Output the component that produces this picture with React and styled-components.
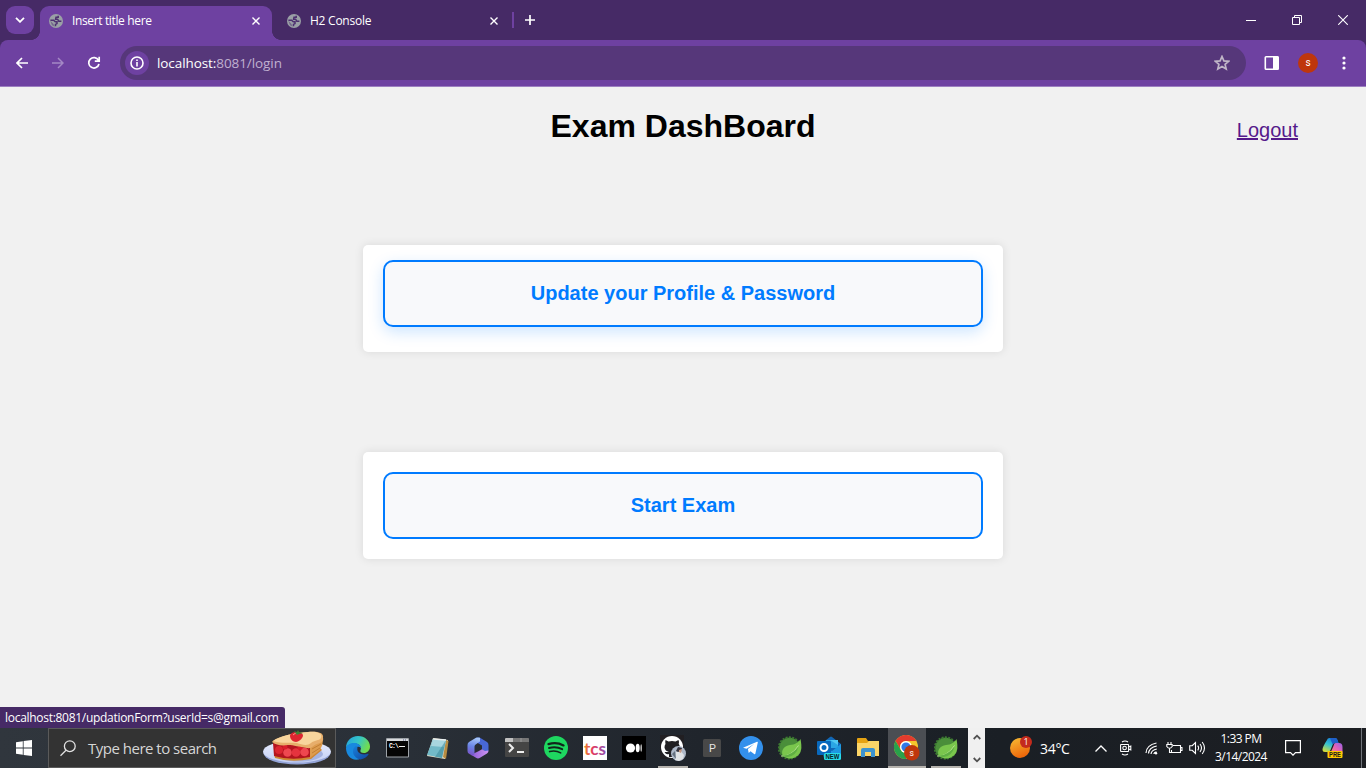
import React from "react";
import styled, { createGlobalStyle, css } from "styled-components";

const Global = createGlobalStyle`
  *, *::before, *::after { box-sizing: border-box; }
  html, body { margin: 0; padding: 0; overflow: hidden; }
  svg { display: block; flex: none; }
`;

const ui = `"Segoe UI", "Open Sans", "Noto Sans", sans-serif`;
const strip = "#462a66";
const bar = "#6e41a1";

const Screen = styled.div`
  width: 1366px;
  height: 768px;
  display: flex;
  flex-direction: column;
  font-family: ${ui};
  overflow: hidden;
  background: #f1f1f1;
`;

/* Browser chrome */
const TabStrip = styled.div`
  height: 40px;
  flex: none;
  background: ${strip};
  display: flex;
  padding: 6px 0 0 6px;
`;
const TabSearch = styled.div`
  width: 28px;
  height: 28px;
  border-radius: 9px;
  background: ${bar};
  display: flex;
  align-items: center;
  justify-content: center;
  margin-right: 6px;
`;
const Tab = styled.div`
  width: ${(p) => p.$w}px;
  height: 34px;
  display: flex;
  align-items: center;
  padding: 0 ${(p) => (p.$active ? 12 : 14)}px 5px ${(p) => (p.$active ? 9 : 15)}px;
  position: relative;
  border-radius: 9px 9px 0 0;
  ${(p) =>
    p.$active &&
    css`
      background: ${bar};
      &::before,
      &::after {
        content: "";
        position: absolute;
        bottom: 0;
        width: 9px;
        height: 9px;
      }
      &::before {
        left: -9px;
        background: radial-gradient(circle at 0 0, transparent 8.6px, ${bar} 9.2px);
      }
      &::after {
        right: -9px;
        background: radial-gradient(circle at 100% 0, transparent 8.6px, ${bar} 9.2px);
      }
    `}
`;
const TabTitle = styled.span`
  flex: 1;
  margin-left: 9px;
  font-size: 12px;
  line-height: 16px;
  letter-spacing: ${(p) => p.$ls}px;
  color: #fff;
  white-space: nowrap;
`;
const TabDivider = styled.div`
  width: 2px;
  height: 16px;
  margin: 6px 11px 0 0;
  background: ${bar};
`;
const PlusBox = styled.div`
  padding-top: 9px;
`;
const WindowControls = styled.div`
  margin-left: auto;
  display: flex;
  height: 28px;
`;
const WindowButton = styled.div`
  width: 46px;
  display: flex;
  align-items: center;
  justify-content: center;
`;
const ToolbarBack = styled.div`
  background: ${strip};
  flex: none;
`;
const Toolbar = styled.div`
  height: 47px;
  background: ${bar};
  border-bottom: 1px solid #9c7fc0;
  border-radius: 8px 8px 0 0;
  display: flex;
  align-items: center;
  padding: 0 4px 0 4px;
`;
const ToolButton = styled.div`
  width: 36px;
  display: flex;
  align-items: center;
  justify-content: center;
`;
const Omnibox = styled.div`
  flex: 1;
  height: 34px;
  margin: 0 8px;
  border-radius: 17px;
  background: #56377a;
  display: flex;
  align-items: center;
  padding: 0 16px 0 5px;
`;
const InfoDisc = styled.div`
  width: 24px;
  height: 24px;
  border-radius: 50%;
  background: ${bar};
  display: flex;
  align-items: center;
  justify-content: center;
`;
const Address = styled.div`
  flex: 1;
  margin-left: 8px;
  font-size: 13.5px;
  line-height: 20px;
  letter-spacing: -0.08px;
  color: #c0b0d0;
  b {
    font-weight: 400;
    color: #fff;
  }
`;
const Avatar = styled.div`
  width: 20px;
  height: 20px;
  border-radius: 50%;
  background: #bf360c;
  color: #fff;
  font: 400 10px/19px Roboto, sans-serif;
  text-align: center;
`;

/* Page */
const Page = styled.main`
  position: relative;
  height: 641px;
  flex: none;
  background: #f1f1f1;
  font-family: Arial, "Liberation Sans", sans-serif;
  display: flex;
  flex-direction: column;
  align-items: center;
`;
const PageHeader = styled.header`
  width: 100%;
  height: 158px;
  padding: 21px 68px 0;
  display: grid;
  grid-template-columns: 1fr auto 1fr;
  align-items: baseline;
  align-content: start;
`;
const Title = styled.h1`
  grid-column: 2;
  margin: 0;
  font-size: 32px;
  line-height: 37px;
  color: #000;
`;
const Logout = styled.a`
  justify-self: end;
  font-size: 20px;
  color: #551a8b;
  text-decoration: underline;
`;
const Card = styled.section`
  width: 640px;
  height: 107px;
  padding: 20px;
  margin-bottom: 100px;
  border-radius: 5px;
  background: #fff;
  box-shadow: 0 0 10px rgba(0, 0, 0, 0.1);
`;
const CardLink = styled.div`
  height: 67px;
  border: 2px solid #007bff;
  border-radius: 10px;
  background: #f8f9fb;
  color: #007bff;
  font-size: 20px;
  font-weight: 700;
  line-height: 62px;
  text-align: center;
  ${(p) =>
    p.$hover &&
    css`
      transform: translateY(-5px);
      box-shadow: 0 5px 15px rgba(0, 123, 255, 0.2);
    `}
`;
const StatusBubble = styled.div`
  position: absolute;
  left: 0;
  bottom: 0;
  width: 285px;
  height: 21px;
  padding-left: 5px;
  border-radius: 0 3px 0 0;
  background: ${strip};
  color: #fff;
  font: 12px/21px ${ui};
  letter-spacing: -0.29px;
  white-space: nowrap;
`;

/* Taskbar */
const Taskbar = styled.footer`
  height: 40px;
  flex: none;
  display: flex;
  background: linear-gradient(90deg, #30363d 0, #2a3038 380px, #20252c 700px, #1a1f25 1000px, #1c1e22 1366px);
`;
const StartButton = styled.div`
  width: 48px;
  display: flex;
  align-items: center;
  justify-content: center;
`;
const SearchBox = styled.div`
  width: 288px;
  height: 40px;
  border: 1px solid #5a5a5a;
  background: #333;
  display: flex;
  align-items: center;
  padding: 0 4px 0 11px;
`;
const SearchText = styled.span`
  flex: 1;
  margin-left: 12px;
  font-size: 15px;
  letter-spacing: -0.5px;
  color: #d6d6d6;
  white-space: nowrap;
`;
const AppList = styled.div`
  display: flex;
  width: 629px;
  margin-left: 3px;
  gap: 1px;
`;
const AppSlot = styled.div`
  width: 38px;
  flex: none;
  height: 40px;
  margin-left: ${(p) => p.$shift || 0}px;
  display: flex;
  align-items: center;
  justify-content: center;
  background: ${(p) => (p.$active ? "#4b4e53" : "transparent")};
  ${(p) =>
    p.$open &&
    css`
      background-image: linear-gradient(#b5b2ad, #b5b2ad);
      background-size: ${p.$active ? "100%" : "30px"} 2px;
      background-position: center bottom;
      background-repeat: no-repeat;
    `}
`;
const TaskScroll = styled.div`
  width: 17px;
  background: #f0f0f0;
  display: flex;
  flex-direction: column;
  align-items: center;
  justify-content: space-between;
  padding: 6px 0 5px;
`;
const Tray = styled.div`
  flex: 1;
  display: flex;
  align-items: center;
  padding-left: 24px;
`;
const TrayItem = styled.div`
  width: ${(p) => p.$w}px;
  display: flex;
  align-items: center;
  justify-content: center;
`;
const Temperature = styled.span`
  width: 42px;
  margin-left: 7px;
  font-size: 14px;
  letter-spacing: -0.3px;
  color: #fff;
`;
const Clock = styled.div`
  width: 54px;
  margin-left: -2px;
  font-size: 12px;
  line-height: 18px;
  letter-spacing: -0.55px;
  text-align: center;
  color: #fff;
  white-space: nowrap;
`;
const ShowDesktop = styled.div`
  width: 5px;
  height: 40px;
  margin-left: auto;
  border-left: 1px solid #70747a;
`;

const Line = ({ w = 16, h = w, vb = `0 0 ${w} ${h}`, sw = 1.5, c = "#fff", children }) => (
  <svg width={w} height={h} viewBox={vb} fill="none" stroke={c} strokeWidth={sw}>
    {children}
  </svg>
);

const Globe = () => (
  <svg width="14" height="14" viewBox="0 0 14 14">
    <circle cx="7" cy="7" r="7" fill="#9aa0a6" />
    <path
      d="M1.400 6.200H4.600L6.300 7.800H8V9.600L6.500 10.400V12.300M9.200 1.800V3.200H7L6.600 5.200H8.600L9.800 7.200H12.400"
      fill="none"
      stroke="#4d3070"
      strokeWidth="1.500"
    />
    <path d="M1.300 6.800 4.500 10 5.500 12.500 3 11.200Z" fill="#4d3070" opacity=".5" />
  </svg>
);
const Cross = () => (
  <Line w={8} sw={1.4}>
    <path d="M.5.500 7.500 7.500M7.500.500.500 7.500" />
  </Line>
);

const Pie = () => (
  <svg width="68" height="36" viewBox="0 0 68 36">
    <defs>
      <linearGradient id="plate" y1="0" x2="0" y2="1">
        <stop stopColor="#e9eeff" />
        <stop offset="1" stopColor="#c3cff3" />
      </linearGradient>
    </defs>
    <ellipse cx="34" cy="23" rx="33.500" ry="11.500" fill="#93a3d6" />
    <ellipse cx="34" cy="21.500" rx="34" ry="11" fill="url(#plate)" />
    <ellipse cx="36" cy="24" rx="24" ry="7.500" fill="#a5b3e0" />
    <path d="M11 24Q28 29 46 26L57 18 59 20 48 29Q28 33 12 28Z" fill="#cf8732" />
    <path d="M10 13 11 26Q28 31 47 27V16Z" fill="#b3151f" />
    <path d="M47 17Q52 12 60 10 60 15 57 20L47 28Z" fill="#dd9c4e" />
    <path d="M49 19 58 14M49 23 57 18" stroke="#c27f35" fill="none" />
    <circle cx="16" cy="20" r="4" fill="#dd2631" />
    <circle cx="24.500" cy="22.500" r="4.300" fill="#ef4850" />
    <circle cx="33" cy="22.500" r="4.300" fill="#e5333e" />
    <circle cx="41.500" cy="22" r="4.300" fill="#ee474f" />
    <circle cx="22" cy="17" r="2.500" fill="#d81e2a" />
    <circle cx="37" cy="17.500" r="2.500" fill="#d81e2a" />
    <path d="M9 12C13 7 30 3 45 2 56 1 61 3 60 8 61 11 58 13 54 14 50 15 49 19 44 18 36 17 31 15 25 15 18 16 13 15 9 12Z" fill="#e7ae6b" />
    <path d="M10 11C16 6 31 3 45 2 55 1 60 4 58 8 56 11 51 10 48 13 45 16 39 15 34 13 27 12 20 14 10 11Z" fill="#f8d59c" />
    <path d="M27 6C27 1 39 1 40 5 40 9 35 12 33 12 30 12 27 9 27 6Z" fill="#dc2630" />
    <path d="M30 5Q32 2 35 4" stroke="#ff8c87" fill="none" />
    <path d="m31 1 3 1 1-2 1 2 4 1-4 1-2 1Z" fill="#3d8234" />
  </svg>
);

const Edge = () => (
  <svg width="24" height="24" viewBox="0 0 24 24">
    <defs>
      <linearGradient id="edgeTop" x1="0" x2="1" y2=".4">
        <stop stopColor="#219fe1" />
        <stop offset=".55" stopColor="#36c6c5" />
        <stop offset="1" stopColor="#70dc50" />
      </linearGradient>
      <linearGradient id="edgeLow" y1="0" x1="0" x2="1" y2="1">
        <stop stopColor="#1782dd" />
        <stop offset="1" stopColor="#12439b" />
      </linearGradient>
    </defs>
    <path d="M0 12C0 5 5 0 12 0S24 5 24 10.500C24 14.500 21 17 18 17S14 15.500 14.400 14.500C16 11.500 14 7.500 9 7.500 4 7.500.5 10 0 12Z" fill="url(#edgeTop)" />
    <path d="M0 12C.5 9 4 7 8.500 7 12 7 15 9.500 15 12 12 9 8.500 11.500 8.500 15.500 8.500 19 12 22 15 22.500 7 26.500 0 20 0 12Z" fill="#1889df" />
    <path d="M9 10.500C5 14 7 22.500 14.500 23.500 18 23 21 21 22.500 18.500 23 17.500 22 17.500 21.500 17.800 16 20 10 16.500 11.500 11.500 11 10 9.800 10 9 10.500Z" fill="url(#edgeLow)" />
  </svg>
);
const Cmd = () => (
  <svg width="23" height="20" viewBox="0 0 23 20">
    <path d="M.5.5h22v18.500H.5Z" fill="#050505" stroke="#9ea3a8" />
    <path d="M1 1h21v2H1Z" fill="#d8dadd" />
    <path d="M17 2h1M19 2h1" stroke="#555c88" />
    <text x="3" y="9.500" fontSize="6.500" fontWeight="700" fontFamily="Liberation Mono, monospace" fill="#fff" textLength="10">C:\</text>
    <path d="M13 8.500h6" stroke="#eee" />
  </svg>
);
const Notepad = () => (
  <svg width="23" height="23" viewBox="0 0 23 23">
    <path d="M7 1 22 3 19 22 1 19Z" fill="#e2ddc8" />
    <path d="M20 3 22.500 4 20 22 17 20Z" fill="#b68c42" />
    <path d="M7 2 20 3 16 21 1 18Z" fill="#72bac8" />
    <path d="M7 2 20 3 18 10 5 9Z" fill="#a8d6df" />
    <path d="M20 3 16 21 9 20Z" fill="#3a8999" opacity=".55" />
    <path d="M7.500 2 20 3" stroke="#e9eeee" strokeWidth="1.500" />
  </svg>
);
const Office = () => (
  <svg width="22" height="22" viewBox="0 0 22 22">
    <defs>
      <linearGradient id="offLeft" y1="0" x1=".5" x2=".3" y2="1">
        <stop stopColor="#a6c6f8" />
        <stop offset=".5" stopColor="#6a86e6" />
        <stop offset="1" stopColor="#7a52c8" />
      </linearGradient>
      <linearGradient id="offLow">
        <stop stopColor="#8a5bd6" />
        <stop offset="1" stopColor="#cf94f2" />
      </linearGradient>
    </defs>
    <path d="M9 .8Q11 0 13 .8L20 5Q21.500 6 21.500 8V13Q21.500 15 20 15.500L15 12.500V8.500L9 5Z" fill="#4868d6" />
    <path d="M21.500 13.500Q21.500 15.500 20 16.500L13 20.800Q11 22 9 20.800L4 17.800 11 14.500 15 12.300 18 14Z" fill="url(#offLow)" />
    <path d="M13 .8Q11 0 9 .8L2 5Q.5 6 .5 8V14Q.5 16 2 16.800L5 18.500Q8 18.500 7.500 14.500V9.500Q7.500 8 9 7.200L13 4.500Z" fill="url(#offLeft)" />
  </svg>
);
const Terminal = () => (
  <svg width="24" height="20" viewBox="0 0 24 20">
    <rect width="24" height="19" rx="1" fill="#454545" />
    <path d="M0 1Q0 0 1 0H23Q24 0 24 1V4H0Z" fill="#777" />
    <path d="M1 0H8V4H0V1Z" fill="#c1c1c1" />
    <path d="M16 0V4" stroke="#999" />
    <path d="m4 6 4 4-4 4" stroke="#eee" strokeWidth="2" fill="none" />
    <path d="M12 14h7" stroke="#eee" strokeWidth="2" />
  </svg>
);
const Spotify = () => (
  <svg width="24" height="24" viewBox="0 0 24 24">
    <circle cx="12" cy="12" r="12" fill="#1ed760" />
    <g fill="none" stroke="#12251b" strokeLinecap="round">
      <path d="M4.500 8.100Q12.500 5.500 19.500 9.400" strokeWidth="2.300" />
      <path d="M5 12Q12 10 18.200 13.200" strokeWidth="1.900" />
      <path d="M5.600 15.600Q11.500 14 16.700 16.900" strokeWidth="1.600" />
    </g>
  </svg>
);
const Tcs = () => (
  <svg width="24" height="24" viewBox="0 0 24 24">
    <defs>
      <linearGradient id="tcsInk">
        <stop stopColor="#ee862a" />
        <stop offset=".4" stopColor="#e23b64" />
        <stop offset="1" stopColor="#8c50b7" />
      </linearGradient>
    </defs>
    <path d="M0 0h24v24H0Z" fill="#fff" />
    <text x="1" y="18.500" textLength="22" lengthAdjust="spacingAndGlyphs" fontFamily="Lato, sans-serif" fontSize="17.500" fontWeight="700" fill="url(#tcsInk)">tcs</text>
  </svg>
);
const Medium = () => (
  <svg width="24" height="24" viewBox="0 0 24 24">
    <path d="M0 0h24v24H0Z" />
    <circle cx="8.500" cy="12" r="4.600" fill="#fff" />
    <ellipse cx="15.700" cy="12" rx="2" ry="4.200" fill="#fff" />
    <ellipse cx="19.200" cy="12" rx=".8" ry="3.800" fill="#bbb" />
  </svg>
);
const Github = () => (
  <svg width="26" height="26" viewBox="0 0 26 26">
    <path d="M0 0h24v24H0Z" fill="#211f22" />
    <circle cx="12" cy="12" r="11" fill="#fff" />
    <path d="M5.500 5 8.500 6.500Q12 5.500 15.500 6.500L18.500 5Q19.500 7 18.700 8.700 20 10 19.500 13 18.500 16.500 14.500 17L15 22H9V19Q6 20 4.500 17 7 17 9 17 5 16 4.500 12.500 4.500 10 5.500 9 5 7 5.500 5Z" fill="#211f22" />
    <circle cx="18.500" cy="18.500" r="7.500" fill="#aeb8c8" />
    <path d="m15 25 1-8 4-2 4 5-1 4-4 2Z" fill="#e0e2e5" />
    <path d="m16 16 2-4 4 1-1 3-3 1Z" fill="#35333d" />
    <path d="m19 15 3-1-1 4-2-1Z" fill="#c79a83" />
    <path d="m12 19 3-3 1 8Z" fill="#65707e" />
  </svg>
);
const Letter = () => (
  <svg width="18" height="18" viewBox="0 0 18 18">
    <rect width="18" height="18" rx="1.500" fill="#484848" />
    <text x="9.500" y="13" textAnchor="middle" fontSize="10.500" fontFamily="Liberation Sans, sans-serif" fill="#e6e6e6">P</text>
  </svg>
);
const Telegram = () => (
  <svg width="24" height="24" viewBox="0 0 24 24">
    <circle cx="12" cy="12" r="12" fill="#3390ec" />
    <path d="m4 11.700 14-6q1-.3.800.900l-2.400 11q-.3 1-1.300.4l-3.600-2.700-1.800 1.800-.8-4 6.500-5.400-7.800 5Z" fill="#fff" />
  </svg>
);
const Leaf = () => (
  <svg width="24" height="24" viewBox="0 0 24 24">
    <circle cx="11.500" cy="12" r="10.500" fill="#4a8e3a" />
    <circle cx="11.500" cy="12" r="10.700" fill="none" stroke="#3c7931" strokeWidth="2" strokeDasharray="2 1.300" />
    <path d="M22.500 3C24 11 24 17 18.500 20.500 14 23.500 8 23 4.500 19 3 14 6 10 12 9 17 8.500 20 7 22.500 3Z" fill="#7ac64d" />
    <path d="M3 20Q13 21 20.500 9.500" fill="none" stroke="#c3e79c" strokeWidth=".9" />
    <path d="M4.500 19.500Q14 19.500 20.500 10.500 18.500 19.500 10 21 7 21.500 4.500 19.500Z" fill="#5fb043" />
  </svg>
);
const Outlook = () => (
  <svg width="24" height="24" viewBox="0 0 24 24">
    <path d="M4 8 13 1Q14 0 15 1L24 8V17H5Z" fill="#1267b5" />
    <path d="M9 4h12v8H9Z" fill="#2ba6e4" />
    <path d="m13 4 8 5V4Z" fill="#50c8f2" />
    <path d="m5 11 10 4 9-7v12q0 2-2 2H7Z" fill="#1e98e0" />
    <rect y="5" width="14" height="14" rx="1" fill="#0869bd" />
    <circle cx="7" cy="11.500" r="3.500" stroke="#fff" strokeWidth="2" fill="none" />
    <rect x="7" y="17" width="17" height="7" rx="1.500" fill="#28dce9" />
    <text x="8.500" y="23" textLength="14" lengthAdjust="spacingAndGlyphs" fontSize="6.800" fontWeight="700" fontFamily="Liberation Sans, sans-serif" fill="#06232a">NEW</text>
  </svg>
);
const Folder = () => (
  <svg width="22" height="20" viewBox="0 0 22 20">
    <path d="M0 1Q0 0 1 0H9L11 3H21Q22 3 22 4V18H0Z" fill="#e5a313" />
    <path d="M0 5H10L12 3H22V18H0Z" fill="#fbd568" />
    <path d="M4 19V12Q4 10 6 10H16Q18 10 18 12V19H14V14H8V19Z" fill="#3d93ce" />
  </svg>
);
const Chrome = () => (
  <svg width="26" height="26" viewBox="0 0 26 26">
    <circle cx="12" cy="12" r="12" fill="#f5c62d" />
    <path d="M1.600 6A12 12 0 0 1 22.400 6H12A6 6 0 0 0 6.800 15Z" fill="#e33b2e" />
    <path d="M1.600 6A12 12 0 0 0 12 24L17.200 15A6 6 0 0 1 6.800 15Z" fill="#28a14b" />
    <circle cx="12" cy="12" r="6" fill="#fff" />
    <circle cx="12" cy="12" r="4.600" fill="#3079e7" />
    <circle cx="17.800" cy="17.800" r="7.700" fill="#bf360c" />
    <text x="17.800" y="21" textAnchor="middle" fontSize="8.500" fontFamily="Roboto, sans-serif" fill="#fff">s</text>
  </svg>
);
const Copilot = () => (
  <svg width="22" height="22" viewBox="0 0 22 22">
    <defs>
      <linearGradient id="coLeft" x1=".7" x2=".2" y2="1">
        <stop stopColor="#1579dc" />
        <stop offset=".5" stopColor="#36c2d0" />
        <stop offset="1" stopColor="#d7dd37" />
      </linearGradient>
      <linearGradient id="coRight" y1="0" x1="1" x2="0" y2="1">
        <stop stopColor="#9561e7" />
        <stop offset=".5" stopColor="#e763b5" />
        <stop offset="1" stopColor="#f8975d" />
      </linearGradient>
    </defs>
    <path d="M5 3Q5.500 1 7.500 1H13Q15 1 15.500 3L16.500 6H13Q11 6 10.500 8L8.500 13Q7.500 15 5.500 15H3Q.5 15 .5 12.500.5 10 5 3Z" fill="url(#coLeft)" />
    <path d="M8 1H13Q15 1 15.500 3L16.500 6H13L10.500 7Z" fill="#1f5fc8" />
    <path d="M13.500 6H17Q20.500 6 20.500 10V17H8L11.500 9Q12 6 13.500 6Z" fill="url(#coRight)" />
    <rect x="5.500" y="14" width="15" height="7" rx="1" fill="#ffc800" />
    <text x="7" y="20" textLength="12" lengthAdjust="spacingAndGlyphs" fontSize="6.500" fontWeight="700" fontFamily="Liberation Sans, sans-serif" fill="#1c1c1c">PRE</text>
  </svg>
);

const apps = [
  { Icon: Edge },
  { Icon: Cmd },
  { Icon: Notepad, shift: 1 },
  { Icon: Office, shift: 2 },
  { Icon: Terminal },
  { Icon: Spotify },
  { Icon: Tcs },
  { Icon: Medium },
  { Icon: Github, open: true },
  { Icon: Letter },
  { Icon: Telegram },
  { Icon: Leaf },
  { Icon: Outlook },
  { Icon: Folder },
  { Icon: Chrome, open: true, active: true },
  { Icon: Leaf, open: true },
];

function BrowserChrome() {
  return (
    <>
      <TabStrip>
        <TabSearch>
          <Line w={10} h={6} sw={1.8}><path d="m1 .8 4 4 4-4" /></Line>
        </TabSearch>
        <Tab $w={232} $active>
          <Globe />
          <TabTitle $ls={-0.36}>Insert title here</TabTitle>
          <Cross />
        </Tab>
        <Tab $w={240}>
          <Globe />
          <TabTitle $ls={-0.25}>H2 Console</TabTitle>
          <Cross />
        </Tab>
        <TabDivider />
        <PlusBox>
          <Line w={10} sw={1.7}><path d="M5 0v10M0 5h10" /></Line>
        </PlusBox>
        <WindowControls>
          <WindowButton><Line w={10} sw={1}><path d="M0 5.500h10" /></Line></WindowButton>
          <WindowButton><Line w={10} sw={1}><path d="M.5 2.500h7v7h-7ZM2.500 2.500v-2h7v7h-2" /></Line></WindowButton>
          <WindowButton><Line w={10} sw={1.1}><path d="m.2.2 9.600 9.600M9.800.2.2 9.800" /></Line></WindowButton>
        </WindowControls>
      </TabStrip>
      <ToolbarBack>
        <Toolbar>
          <ToolButton><Line w={12} sw={1.7}><path d="M12 6H1M6 1 1 6l5 5" /></Line></ToolButton>
          <ToolButton><Line w={12} sw={1.5} c="#a488c5"><path d="M0 6h11M6 1l5 5-5 5" /></Line></ToolButton>
          <ToolButton><Line w={14} sw={1.7}><path d="M11.500 4.300A5.200 5.200 0 1 0 12 8M12.200.8v4.400H7.800" /></Line></ToolButton>
          <Omnibox>
            <InfoDisc>
              <Line w={14} sw={1.6}><circle cx="7" cy="7" r="6" /><path d="M7 6v4.500M7 3.500v1.600" /></Line>
            </InfoDisc>
            <Address><b>localhost:</b>8081/login</Address>
            <Line w={16} sw={1.7} c="#c0b6c7">
              <path d="m8 1.500 1.900 4.400 4.700.4-3.500 3.100 1.100 4.700L8 11.600l-4.200 2.500 1.100-4.700-3.500-3.100 4.700-.4Z" />
            </Line>
          </Omnibox>
          <ToolButton>
            <Line w={16} h={16} sw={1.600}><rect x="1.300" y="1.800" width="12.900" height="12.400" rx=".8" /><path d="M9 1.500h5.500v13H9Z" fill="#fff" stroke="none" /></Line>
          </ToolButton>
          <ToolButton><Avatar>s</Avatar></ToolButton>
          <ToolButton>
            <svg width="4" height="14" viewBox="0 0 4 14" fill="#fff"><circle cx="2" cy="2" r="1.600" /><circle cx="2" cy="7" r="1.600" /><circle cx="2" cy="12" r="1.600" /></svg>
          </ToolButton>
        </Toolbar>
      </ToolbarBack>
    </>
  );
}

function SystemTray() {
  return (
    <Tray>
      <svg width="24" height="24" viewBox="0 0 24 24">
        <defs>
          <linearGradient id="sun" x2=".4" y2="1"><stop stopColor="#f7bd35" /><stop offset="1" stopColor="#ed680b" /></linearGradient>
        </defs>
        <circle cx="11" cy="12" r="10" fill="url(#sun)" />
        <circle cx="17" cy="6" r="6" fill="#c42b1c" />
        <text x="17" y="9.300" textAnchor="middle" fontSize="9" fontFamily="Open Sans, sans-serif" fill="#fff">1</text>
      </svg>
      <Temperature>34°C</Temperature>
      <TrayItem $w={38}><Line w={12} h={7} sw={1.3}><path d="m.5 6.500 5.500-5.500 5.500 5.500" /></Line></TrayItem>
      <TrayItem $w={12}>
        <Line w={12} h={16} sw={1.100}><path d="M2 2Q5 0 8 2M2 14Q5 16 8 14" /><rect x=".6" y="4.500" width="8" height="7" rx=".5" /><circle cx="4.600" cy="8" r="1.800" /><path d="m8.600 7 2.200-1v4l-2.200-1" /></Line>
      </TrayItem>
      <TrayItem $w={38}>
        <Line w={13} h={13} sw={1.200}><path d="M1 11Q1.500 3 11.500 1M3.500 11.500Q4 5.500 11.800 4M6 12Q6.500 8 11.800 7M8.800 12Q9 10.500 11.500 9.800" /><circle cx="11" cy="11.300" r="1.200" fill="#fff" stroke="none" /></Line>
      </TrayItem>
      <TrayItem $w={8}>
        <Line w={17} h={14} sw={1.100}><path d="M7 4.500h7.500v7H5.500V9M14.500 6.500h1.500v3h-1.500M.8 3.500v2q2.700 3.500 5.400 0v-2ZM2 3.500V1M5 3.500V1M3.500 7.500v4H6" /></Line>
      </TrayItem>
      <TrayItem $w={38}>
        <Line w={17} h={14} sw={1.100}><path d="M.7 4.700h2.500L6.500 1.500v11L3.200 9.300H.7ZM8.700 4.700Q10.500 7 8.700 9.300M11 3Q14 7 11 11M13.200 1Q17.800 7 13.200 13" /></Line>
      </TrayItem>
      <Clock>1:33 PM<br />3/14/2024</Clock>
      <TrayItem $w={50}>
        <Line w={16} h={16} sw={1.200}><path d="M.6.6h14.800v12H10.500L8 15.200 5.500 12.600H.6Z" /></Line>
      </TrayItem>
      <TrayItem $w={30}><Copilot /></TrayItem>
      <ShowDesktop />
    </Tray>
  );
}

export default function App() {
  return (
    <Screen>
      <Global />
      <BrowserChrome />
      <Page>
        <PageHeader>
          <Title>Exam DashBoard</Title>
          <Logout href="#">Logout</Logout>
        </PageHeader>
        <Card><CardLink $hover>Update your Profile &amp; Password</CardLink></Card>
        <Card><CardLink>Start Exam</CardLink></Card>
        <StatusBubble>localhost:8081/updationForm?userId=s@gmail.com</StatusBubble>
      </Page>
      <Taskbar>
        <StartButton>
          <svg width="16" height="16" viewBox="0 0 16 16" fill="#fff"><path d="M0 2.200 6.800 1.200V7.600H0ZM7.600 1.100 16 0V7.600H7.600ZM0 8.400H6.800V14.800L0 13.800ZM7.600 8.400H16V16L7.600 14.900Z" /></svg>
        </StartButton>
        <SearchBox>
          <Line w={16} h={17} sw={1.300} c="#e2e2e2"><circle cx="9.800" cy="6.200" r="5.400" /><path d="m6 10.300-5.500 5.500" /></Line>
          <SearchText>Type here to search</SearchText>
          <Pie />
        </SearchBox>
        <AppList>
          {apps.map(({ Icon, open, active, shift }, i) => (
            <AppSlot key={i} $open={open} $active={active} $shift={shift}><Icon /></AppSlot>
          ))}
        </AppList>
        <TaskScroll>
          <Line w={8} h={6} sw={1.800} c="#505050"><path d="m.7 5 3.300-3.300L7.300 5" /></Line>
          <Line w={8} h={6} sw={1.800} c="#505050"><path d="m.7 1 3.300 3.300L7.300 1" /></Line>
        </TaskScroll>
        <SystemTray />
      </Taskbar>
    </Screen>
  );
}
